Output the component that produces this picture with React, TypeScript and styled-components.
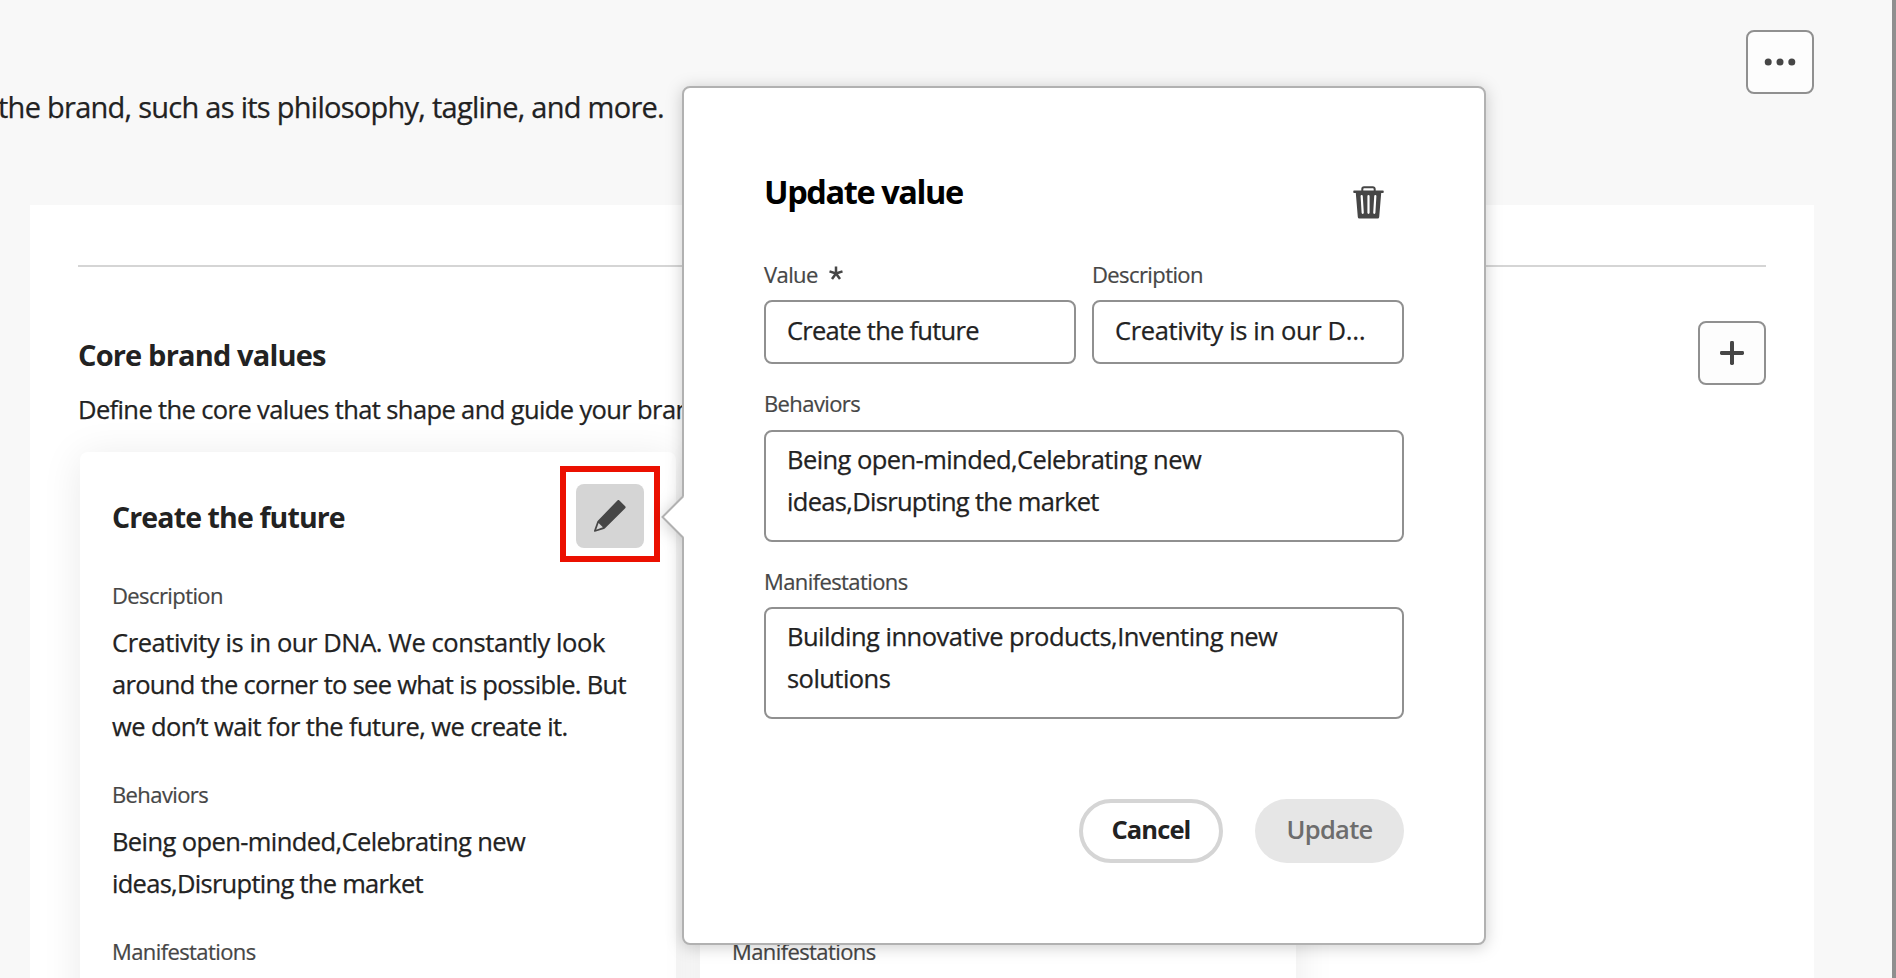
import React from 'react';
import styled, { createGlobalStyle, css } from 'styled-components';

const GlobalStyle = createGlobalStyle`
  * { box-sizing: border-box; }
  body { margin: 0; background: #f8f8f8; }
  h1, h2, h3, p { margin: 0; }
  button { font: inherit; padding: 0; margin: 0; }
`;

const Screen = styled.div`
  position: relative;
  display: flex;
  width: 1896px;
  height: 978px;
  overflow: hidden;
  background: #f8f8f8;
  color: #222;
  font-family: 'Open Sans', 'Noto Sans', sans-serif;
`;

const Content = styled.main`
  flex: 1;
  min-width: 0;
  padding: 0 78px 0 30px;
`;

const EdgeBar = styled.div`
  width: 4px;
  background: #8f8f8f;
`;

const Header = styled.header`
  display: flex;
  justify-content: space-between;
  align-items: flex-start;
  height: 205px;
  padding-top: 30px;
`;

const Intro = styled.p`
  margin: 53px 0 0 -32px;
  font-size: 29px;
  line-height: 48px;
  letter-spacing: -0.73px;
  -webkit-text-stroke: 0.25px currentColor;
  white-space: nowrap;
`;

const IconButton = styled.button<{ $filled?: boolean }>`
  display: flex;
  align-items: center;
  justify-content: center;
  width: 68px;
  height: 64px;
  border-radius: 8px;
  color: #464646;
  ${({ $filled }) =>
    $filled
      ? css`
          border: 0;
          background: #d5d5d5;
        `
      : css`
          border: 2px solid #909090;
          background: #fdfdfd;
        `}
`;

const Panel = styled.section`
  height: 800px;
  padding: 60px 48px 0;
  background: #fff;
`;

const Divider = styled.hr`
  height: 2px;
  margin: 0 0 54px;
  border: 0;
  background: #d5d5d5;
`;

const SectionHead = styled.div`
  display: flex;
  justify-content: space-between;
  align-items: flex-start;
  height: 131px;
`;

const SectionTitle = styled.h2`
  margin-top: 9px;
  font-size: 29px;
  line-height: 50px;
  font-weight: 700;
  letter-spacing: -0.83px;
`;

const SectionText = styled.p`
  margin-top: 8px;
  font-size: 25.5px;
  line-height: 42px;
  letter-spacing: -0.62px;
  -webkit-text-stroke: 0.25px currentColor;
  white-space: nowrap;
`;

const Cards = styled.div`
  display: flex;
  gap: 24px;
  padding-left: 2px;
`;

const Card = styled.article`
  width: 596px;
  height: 600px;
  padding: 13px 14px 0 32px;
  border-radius: 8px;
  background: #fff;
  box-shadow: 0 4px 40px rgba(0, 0, 0, 0.085);
`;

const CardHead = styled.div`
  display: flex;
  justify-content: space-between;
  align-items: center;
  height: 100px;
  margin-bottom: 14px;
`;

const CardTitle = styled.h3`
  margin-top: 4px;
  font-size: 28.5px;
  line-height: 44px;
  font-weight: 700;
  letter-spacing: -0.88px;
`;

const Highlight = styled.div`
  display: flex;
  align-items: flex-start;
  justify-content: center;
  width: 100px;
  height: 96px;
  padding-top: 12px;
  margin: -2px 2px 0 0;
  border: 6px solid #eb1000;
`;

const Label = styled.div`
  font-size: 22px;
  line-height: 32px;
  color: #464646;
  letter-spacing: -0.6px;
  -webkit-text-stroke: 0.2px currentColor;
  white-space: nowrap;
`;

const CardField = styled.div`
  margin-bottom: 31px;

  ${Label} {
    height: 33px;
    line-height: 33px;
    margin-bottom: 9px;
  }
`;

const Line = styled.span<{ $track?: number }>`
  display: block;
  font-size: 25.5px;
  line-height: 42px;
  letter-spacing: ${({ $track = -0.58 }) => $track}px;
  -webkit-text-stroke: 0.25px currentColor;
  white-space: nowrap;
`;

const Popover = styled.div`
  position: absolute;
  left: 682px;
  top: 86px;
  width: 804px;
  height: 859px;
  padding: 78px 80px 80px;
  border: 2px solid #b1b1b1;
  border-radius: 8px;
  background: #fff;
  filter: drop-shadow(0 2px 8px rgba(0, 0, 0, 0.2));
`;

const Pointer = styled.svg`
  position: absolute;
  left: -23px;
  top: 406px;
`;

const PopoverHead = styled.div`
  display: flex;
  justify-content: space-between;
  height: 92px;
  padding-right: 20px;
  color: #464646;

  svg {
    margin-top: 20px;
  }
`;

const PopoverTitle = styled.h1`
  margin-top: 1px;
  height: 50px;
  font-size: 32.5px;
  line-height: 50px;
  font-weight: 700;
  letter-spacing: -1.4px;
  color: #000;
`;

const FieldRow = styled.div`
  display: flex;
  gap: 16px;
`;

const Field = styled.div<{ $labelHeight: number }>`
  flex: 1;
  min-width: 0;

  ${Label} {
    display: flex;
    align-items: flex-start;
    height: ${({ $labelHeight }) => $labelHeight}px;
    padding-top: ${({ $labelHeight }) => ($labelHeight > 42 ? 23 : 0)}px;
  }
`;

const Input = styled.div`
  height: 64px;
  padding: 7px 22px 0 21px;
  border: 2px solid #909090;
  border-radius: 8px;
`;

const TextArea = styled.div`
  height: 112px;
  padding: 6px 22px 0 21px;
  border: 2px solid #909090;
  border-radius: 8px;
`;

const Required = styled.svg`
  margin: 8px 0 0 11px;
`;

const Actions = styled.div`
  display: flex;
  justify-content: flex-end;
  gap: 32px;
  margin-top: 80px;
`;

const PillButton = styled.button<{ $muted?: boolean }>`
  width: ${({ $muted }) => ($muted ? 149 : 144)}px;
  height: 64px;
  padding-bottom: 4px;
  border: ${({ $muted }) => ($muted ? '0' : '4px solid #d5d5d5')};
  border-radius: 32px;
  background: ${({ $muted }) => ($muted ? '#e6e6e6' : '#fff')};
  color: ${({ $muted }) => ($muted ? '#6d6d6d' : '#222')};
  font-size: 25.5px;
  font-weight: ${({ $muted }) => ($muted ? 600 : 700)};
  letter-spacing: ${({ $muted }) => ($muted ? -0.7 : -0.9)}px;
`;

const MoreIcon = () => (
  <svg width="32" height="8" viewBox="0 0 32 8" fill="currentColor">
    <circle cx="4.2" cy="4" r="3.5" />
    <circle cx="16" cy="4" r="3.5" />
    <circle cx="27.8" cy="4" r="3.5" />
  </svg>
);

const PlusIcon = () => (
  <svg width="24" height="24" viewBox="0 0 24 24" fill="currentColor">
    <rect x="10" y="0" width="4" height="24" rx="1.4" />
    <rect x="0" y="10" width="24" height="4" rx="1.4" />
  </svg>
);

const PencilIcon = () => (
  <svg width="32" height="32" viewBox="0 0 32 32" fill="currentColor">
    <path d="M23.4 .4a1.5 1.5 0 0 1 2 0l5.8 5.8a1.5 1.5 0 0 1 0 2L10.8 28.4a2 2 0 0 1-.9.5L1 31.8a.8.8 0 0 1-1-1L3.1 22a2 2 0 0 1 .5-.9ZM4.6 22.9 2.2 29.7 8.9 27.2Z" />
  </svg>
);

const TrashIcon = () => (
  <svg width="31" height="33" viewBox="0 0 31 33" fill="none">
    <path d="M9.3 5V3a1.8 1.8 0 0 1 1.8-1.8h8.8A1.8 1.8 0 0 1 21.7 3v2" stroke="currentColor" strokeWidth="2" />
    <path
      d="M1 4.4h29a.7.7 0 0 1 .7.7v1.200a.7.7 0 0 1-.7.7h-1.800L26.200 31a1.600 1.600 0 0 1-1.600 1.500H6.400A1.600 1.600 0 0 1 4.800 31L2.800 7H1a.7.7 0 0 1-.7-.7V5.100A.7.7 0 0 1 1 4.400Z"
      fill="currentColor"
    />
    <path d="M8.7 10.200 9.700 26.800M15.500 10.200V26.800M22.300 10.200 21.300 26.800" stroke="#fff" strokeWidth="2.2" strokeLinecap="round" />
  </svg>
);

const AsteriskIcon = () => (
  <Required width="14" height="15" viewBox="-7 -7.5 14 15" stroke="currentColor" strokeWidth="2.5">
    <path d="M0 0V-7M0 0L6.5-2.1M0 0L4 5.6M0 0L-4 5.6M0 0L-6.5-2.1" />
  </Required>
);

export default function App() {
  return (
    <Screen>
      <GlobalStyle />
      <Content>
        <Header>
          <Intro>the brand, such as its philosophy, tagline, and more.</Intro>
          <IconButton aria-label="More">
            <MoreIcon />
          </IconButton>
        </Header>
        <Panel>
          <Divider />
          <SectionHead>
            <div>
              <SectionTitle>Core brand values</SectionTitle>
              <SectionText>Define the core values that shape and guide your brand</SectionText>
            </div>
            <IconButton aria-label="Add">
              <PlusIcon />
            </IconButton>
          </SectionHead>
          <Cards>
            <Card>
              <CardHead>
                <CardTitle>Create the future</CardTitle>
                <Highlight>
                  <IconButton $filled aria-label="Edit">
                    <PencilIcon />
                  </IconButton>
                </Highlight>
              </CardHead>
              <CardField>
                <Label>Description</Label>
                <Line $track={-0.42}>Creativity is in our DNA. We constantly look</Line>
                <Line $track={-0.69}>around the corner to see what is possible. But</Line>
                <Line $track={-0.59}>we don’t wait for the future, we create it.</Line>
              </CardField>
              <CardField>
                <Label>Behaviors</Label>
                <Line $track={-0.6}>Being open-minded,Celebrating new</Line>
                <Line $track={-0.72}>ideas,Disrupting the market</Line>
              </CardField>
              <CardField>
                <Label>Manifestations</Label>
              </CardField>
            </Card>
            <Card>
              <CardHead />
              <CardField>
                <Label>&nbsp;</Label>
                <Line>&nbsp;</Line>
                <Line>&nbsp;</Line>
                <Line>&nbsp;</Line>
              </CardField>
              <CardField>
                <Label>&nbsp;</Label>
                <Line>&nbsp;</Line>
                <Line>&nbsp;</Line>
              </CardField>
              <CardField>
                <Label>Manifestations</Label>
              </CardField>
            </Card>
          </Cards>
        </Panel>
      </Content>
      <EdgeBar />
      <Popover>
        <Pointer width="25" height="46" viewBox="0 0 25 46">
          <path d="M25 1.5 23 2.5 1.500 23 23 43.500 25 44.500Z" fill="#fff" />
          <path d="M22 2.500 1.500 23 22 43.500" fill="none" stroke="#b1b1b1" strokeWidth="2" />
        </Pointer>
        <PopoverHead>
          <PopoverTitle>Update value</PopoverTitle>
          <TrashIcon />
        </PopoverHead>
        <FieldRow>
          <Field $labelHeight={42}>
            <Label>
              Value
              <AsteriskIcon />
            </Label>
            <Input>
              <Line $track={-0.74}>Create the future</Line>
            </Input>
          </Field>
          <Field $labelHeight={42}>
            <Label>Description</Label>
            <Input>
              <Line $track={-0.36}>Creativity is in our D…</Line>
            </Input>
          </Field>
        </FieldRow>
        <FieldRow>
          <Field $labelHeight={66}>
            <Label>Behaviors</Label>
            <TextArea>
              <Line $track={-0.57}>Being open-minded,Celebrating new</Line>
              <Line $track={-0.69}>ideas,Disrupting the market</Line>
            </TextArea>
          </Field>
        </FieldRow>
        <FieldRow>
          <Field $labelHeight={65}>
            <Label>Manifestations</Label>
            <TextArea>
              <Line $track={-0.51}>Building innovative products,Inventing new</Line>
              <Line $track={-0.55}>solutions</Line>
            </TextArea>
          </Field>
        </FieldRow>
        <Actions>
          <PillButton>Cancel</PillButton>
          <PillButton $muted>Update</PillButton>
        </Actions>
      </Popover>
    </Screen>
  );
}
